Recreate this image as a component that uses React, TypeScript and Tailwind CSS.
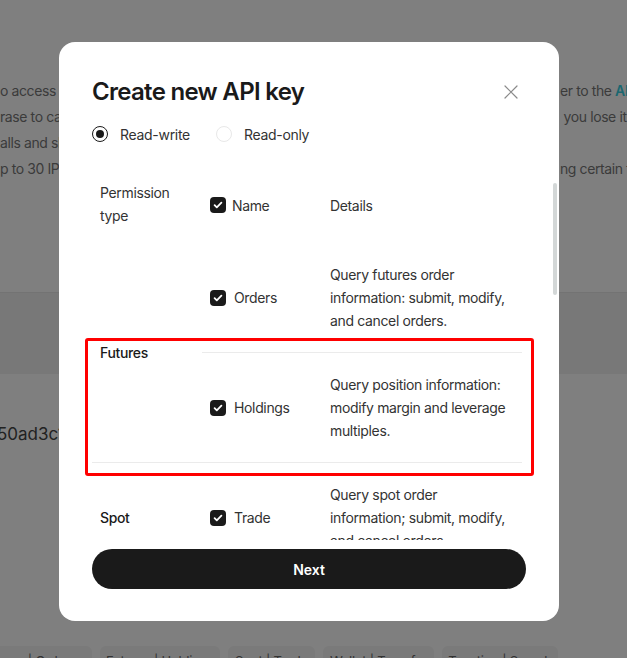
import React from 'react';

type Perm = { group?: string; span?: number; name: string; desc: string[] };

const rows: Perm[] = [
  { group: 'Futures', span: 2, name: 'Orders', desc: ['Query futures order', 'information: submit, modify,', 'and cancel orders.'] },
  { name: 'Holdings', desc: ['Query position information:', 'modify margin and leverage', 'multiples.'] },
  { group: 'Spot', span: 1, name: 'Trade', desc: ['Query spot order', 'information; submit, modify,', 'and cancel orders.'] },
  { group: 'Wallet', span: 1, name: 'Transfer', desc: ['Query transfer records and', 'transfer funds between', 'accounts.'] },
  { group: 'Taxation', span: 1, name: 'Search', desc: ['Query tax records and', 'download tax statements.'] },
  { group: 'Account', span: 1, name: 'Read', desc: ['Query account information', 'and balances.'] },
  { group: 'Earn', span: 1, name: 'Subscribe', desc: ['Query earn products and', 'subscribe or redeem.'] },
];

function Checkbox() {
  return (
    <span className="flex h-4 w-4 shrink-0 items-center justify-center rounded-[4px] bg-[#1a1a1a]">
      <svg width="16" height="16" viewBox="0 0 16 16" fill="none">
        <path d="M4.6 8.1l2.2 2.2 4.6-4.6" stroke="white" strokeWidth="1.8" strokeLinecap="round" strokeLinejoin="round" />
      </svg>
    </span>
  );
}

function Radio({ checked, label }: { checked?: boolean; label: string }) {
  return (
    <label className="flex items-center gap-3">
      {checked ? (
        <span className="flex h-4 w-4 items-center justify-center rounded-full border-[1.5px] border-[#1a1a1a]">
          <span className="h-2 w-2 rounded-full bg-[#1a1a1a]" />
        </span>
      ) : (
        <span className="h-4 w-4 rounded-full border border-[#e8e8e8]" />
      )}
      <span className="text-[14px] tracking-[-0.3px] text-[#333]">{label}</span>
    </label>
  );
}

export default function App() {
  return (
    <div className="relative h-[658px] w-full overflow-hidden bg-white font-['Inter','Liberation_Sans',sans-serif]">
      {/* Page behind the dialog */}
      <div className="pt-[78px] text-[14px] leading-[26px] tracking-[-0.4px] text-[#777]">
        {[
          ['o access the API, create a key first', <>er to the <span className="font-semibold text-[#36cfe0]">API documentation</span></>],
          ['rase to call the API', <>&nbsp;you lose it, reset it</>],
          ['alls and show limits', <></>],
          ['p to 30 IPs per key', <>ng certain functions</>],
        ].map(([l, r], i) => (
          <div key={i} className="grid grid-cols-[560px_67px] whitespace-nowrap">
            <span className="overflow-hidden">{l}</span>
            <span className="overflow-hidden">{r}</span>
          </div>
        ))}
      </div>
      <div className="mt-[110px] h-[82px] border-t border-[#e6e6e6] bg-[#f0f0f0]" />
      <div className="-ml-[3px] mt-[48px] text-[17px] leading-[24px] text-[#444]">50ad3c1e9b7f</div>
      <div className="-ml-[36px] mt-[200px] flex gap-2 whitespace-nowrap text-[13px] tracking-[-0.2px] text-[#666]">
        {[
          ['Futures | Orders', 'w-[128px]'],
          ['Futures | Holdings', 'w-[120px]'],
          ['Spot | Trade', 'w-[87px]'],
          ['Wallet | Transfer', 'w-[111px]'],
          ['Taxation | Search', 'w-[116px]'],
        ].map(([t, w]) => (
          <span key={t} className={`${w} h-[28px] rounded-md bg-[#f4f4f4] pt-[6px] text-center`}>{t}</span>
        ))}
      </div>

      {/* Overlay */}
      <div className="absolute inset-0 bg-black/50" />

      {/* Dialog */}
      <div className="absolute left-[59px] top-[42px] flex h-[579px] w-[500px] flex-col rounded-2xl bg-white px-[33px] pt-[34px]">
        <div className="flex h-[32px] items-center justify-between">
          <h2 className="text-[24px] font-semibold leading-[32px] tracking-[-0.7px] text-[#1a1a1a]">Create new API key</h2>
          <svg className="mr-[8px]" width="14" height="14" viewBox="0 0 14 14" fill="none">
            <path d="M1 1l12 12M13 1L1 13" stroke="#8a8a8a" strokeWidth="1.2" strokeLinecap="round" />
          </svg>
        </div>

        <div className="mt-[14px] flex h-[24px] items-center gap-[26px]">
          <Radio checked label="Read-write" />
          <Radio label="Read-only" />
        </div>

        <div className="-mr-[31px] mt-[15px] h-[379px] overflow-y-auto [scrollbar-width:none]">
          <table className="w-[430px] table-fixed border-collapse text-[14px] leading-[23px] tracking-[-0.35px] text-[#333]">
            <colgroup>
              <col className="w-[110px]" />
              <col className="w-[120px]" />
              <col className="w-[200px]" />
            </colgroup>
            <tbody>
              <tr>
                <td className="px-2 pb-[16px] pt-[20px] align-middle">Permission<br />type</td>
                <td className="px-2 pt-[6px] align-middle">
                  <span className="flex items-center gap-[6px]"><Checkbox />Name</span>
                </td>
                <td className="pl-2 pt-[6px] align-middle">Details</td>
              </tr>
              {rows.map((r) => (
                <tr key={r.name}>
                  {r.group && (
                    <td rowSpan={r.span} className="border-b border-[#ebebeb] px-2 align-middle font-medium text-[#1a1a1a]">
                      {r.group}
                    </td>
                  )}
                  <td className="border-b border-[#ebebeb] px-2 py-[20px] align-middle">
                    <span className="flex items-center gap-[8px]"><Checkbox />{r.name}</span>
                  </td>
                  <td className="whitespace-nowrap border-b border-[#ebebeb] py-[20px] pl-2 align-middle">
                    {r.desc.map((d) => (
                      <div key={d}>{d}</div>
                    ))}
                  </td>
                </tr>
              ))}
            </tbody>
          </table>
        </div>

        {/* Scroll thumb */}
        <div className="pointer-events-none absolute left-[494px] top-[141px] h-[112px] w-[4px] rounded-full bg-[#d3d7d7]" />

        <button className="mt-[9px] h-[40px] w-full rounded-full bg-[#1a1a1a] text-[14px] font-semibold text-white">
          Next
        </button>

        {/* Highlight annotation */}
        <div className="pointer-events-none absolute left-[26px] top-[296px] h-[138px] w-[449px] rounded-[3px] border-[3px] border-[#ff0000]" />
      </div>
    </div>
  );
}
